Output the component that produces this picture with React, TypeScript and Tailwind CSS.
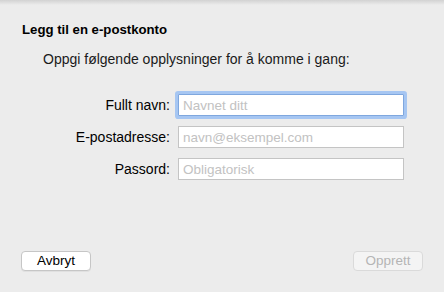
import React from "react";

const fields = [
  { label: "Fullt navn:", placeholder: "Navnet ditt", type: "text", focused: true },
  { label: "E-postadresse:", placeholder: "navn@eksempel.com", type: "email", focused: false },
  { label: "Passord:", placeholder: "Obligatorisk", type: "password", focused: false },
];

export default function App() {
  return (
    <div className="relative flex h-[292px] w-[444px] flex-col bg-[#ececec] px-[21px] pb-[21px] pt-[22px] font-['Liberation_Sans',Arial,sans-serif] text-[13px] leading-[16px] text-[#1a1a1a]">
      {/* window title bar shadow */}
      <div className="absolute inset-x-0 top-0 h-[5px] bg-gradient-to-b from-[#d2d2d2] to-[#ececec]" />

      <h1 className="relative pl-px text-[13.2px] font-bold text-black">Legg til en e-postkonto</h1>
      <p className="mt-[13px] pl-[22px] text-[14px]">Oppgi følgende opplysninger for å komme i gang:</p>

      <div className="mt-[27px] grid grid-cols-[149px_226px] gap-x-[8px] gap-y-[10px]">
        {fields.map((f) => (
          <React.Fragment key={f.label}>
            <label className="flex items-center justify-end text-[14px] text-black">{f.label}</label>
            <input
              type={f.type}
              placeholder={f.placeholder}
              className={`h-[22px] w-full bg-white px-[4px] text-[13.5px] outline-none placeholder:text-[#c2c2c2] ${
                f.focused
                  ? "rounded-[1px] border border-[#7fa7de] ring-[3px] ring-[#a6c6f2]"
                  : "border border-[#c4c4c4]"
              }`}
            />
          </React.Fragment>
        ))}
      </div>

      <div className="mt-auto flex items-center justify-between">
        <button className="h-[20px] w-[70px] rounded-[4px] border border-[#c6c6c6] bg-white text-[13.5px] text-black shadow-[0_1px_0_rgba(0,0,0,0.05)]">
          Avbryt
        </button>
        <button
          disabled
          className="h-[20px] w-[70px] rounded-[4px] border border-[#dadada] bg-[#f4f4f4] text-[13.5px] text-[#b5b5b5]"
        >
          Opprett
        </button>
      </div>
    </div>
  );
}
